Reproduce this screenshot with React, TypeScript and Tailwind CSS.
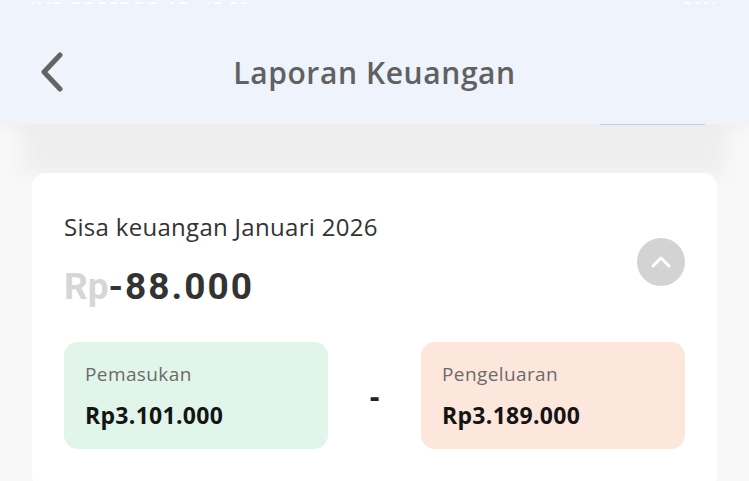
import React from "react";

export default function App() {
  return (
    <div className="w-[749px] h-[481px] overflow-hidden bg-[#f8f8f8] relative" style={{ fontFamily: "'Open Sans', Lato, sans-serif" }}>
      <div className="relative z-10 h-[124px] bg-[#eff3fb] shadow-[0_6px_16px_rgba(0,0,0,0.03)]">
        <div className="h-[4px] overflow-hidden flex items-end justify-between px-[30px]">
          <div className="text-white text-[18px] font-bold leading-none translate-y-[13px] opacity-90">IM3 OOREDOO 4G · 15.32</div>
          <div className="text-white text-[18px] font-bold leading-none translate-y-[13px] opacity-90">21%</div>
        </div>
        <div className="relative flex items-center justify-center h-[120px] pt-[18px]">
          <svg className="absolute left-[38px] top-[48px]" width="28" height="40" viewBox="0 0 28 40" fill="none">
            <path d="M22 3 L6 20 L22 37" stroke="#646464" strokeWidth="5" strokeLinecap="round" strokeLinejoin="round" />
          </svg>
          <div className="text-[30px] font-semibold text-[#616161] tracking-[0.6px] leading-[40px]">Laporan Keuangan</div>
        </div>
        <div className="absolute left-[600px] bottom-[-1px] w-[105px] h-[1px] bg-[#c7cbe0]" />
      </div>
      <div className="h-[50px] bg-[#eeeeee] mx-[24px] blur-[8px]" />
      <div className="relative z-10 mx-[32px] -mt-[1px] bg-white rounded-[14px] px-[32px] pt-[39px] pb-[40px]">
        <div className="flex justify-between">
          <div>
            <div className="text-[24px] text-[#333] leading-[30px] tracking-[0.3px]">Sisa keuangan Januari 2026</div>
            <div className="mt-[25px] flex items-baseline text-[37px] font-bold leading-[40px]" style={{ fontFamily: "Roboto, sans-serif" }}>
              <span className="text-[#d6d6d6]">Rp</span>
              <span className="text-[#333] tracking-[2px]">-88.000</span>
            </div>
          </div>
          <div className="mt-[26px] w-[48px] h-[48px] rounded-full bg-[#d3d3d3] flex items-center justify-center">
            <svg width="24" height="16" viewBox="0 0 24 16" fill="none">
              <path d="M4 12 L12 4 L20 12" stroke="white" strokeWidth="3" strokeLinecap="round" strokeLinejoin="round" />
            </svg>
          </div>
        </div>
        <div className="mt-[35px] flex items-center justify-between">
          <div className="w-[264px] h-[107px] rounded-[14px] bg-[#e1f5ea] px-[21px] pt-[19px]">
            <div className="text-[19px] text-[#6b6b6b] leading-[26px] tracking-[0.4px]">Pemasukan</div>
            <div className="mt-[13px] text-[23px] font-bold text-[#141414] leading-[30px] tracking-[0.3px]">Rp3.101.000</div>
          </div>
          <div className="text-[30px] font-bold text-[#222] leading-none">-</div>
          <div className="w-[264px] h-[107px] rounded-[14px] bg-[#fde7dc] px-[21px] pt-[19px]">
            <div className="text-[19px] text-[#6b6b6b] leading-[26px] tracking-[0.4px]">Pengeluaran</div>
            <div className="mt-[13px] text-[23px] font-bold text-[#141414] leading-[30px] tracking-[0.3px]">Rp3.189.000</div>
          </div>
        </div>
      </div>
    </div>
  );
}
